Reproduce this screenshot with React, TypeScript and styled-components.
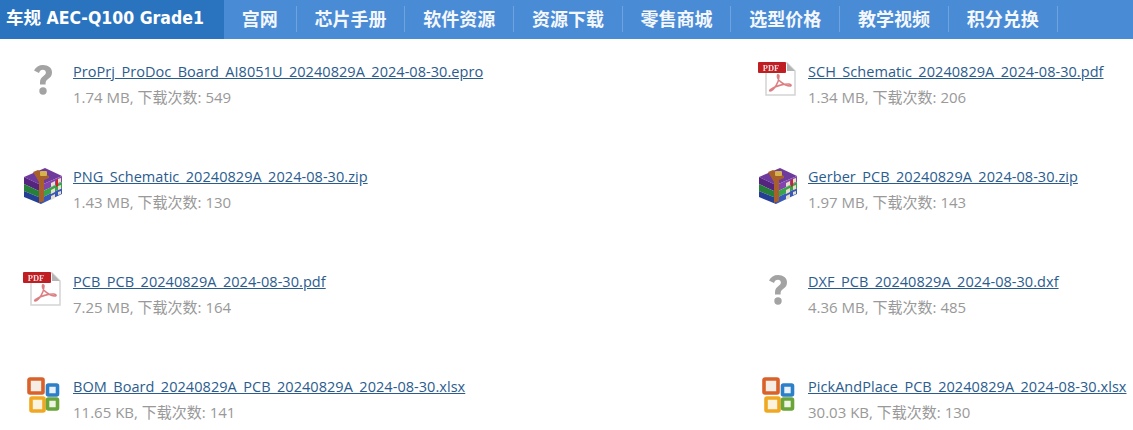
import React from "react";
import styled, { createGlobalStyle } from "styled-components";

const Global = createGlobalStyle`
  html, body { margin: 0; padding: 0; background: #fff; overflow: hidden; }
  body { font-family: "Open Sans", "Noto Sans CJK SC", sans-serif; }
`;
const Page = styled.div`width: 1133px; height: 430px; overflow: hidden;`;
const NavBar = styled.nav`
  display: flex; height: 39px; background: #4a8bd6; color: #fff;
`;
const Brand = styled.div`
  width: 224px; box-sizing: border-box; padding-left: 6px; background: #2a74bf;
  font: bold 17.5px/37px "DejaVu Sans Condensed", "Noto Sans CJK SC", sans-serif; white-space: nowrap;
`;
const NavList = styled.div`display: flex; align-items: center;`;
const NavItem = styled.a`
  box-sizing: border-box; height: 26px; padding: 0 17.85px; border-right: 1px solid #6fa3df;
  font: bold 18px/24px "Noto Sans CJK SC", sans-serif; color: #f4f8fd; white-space: nowrap;
  margin-top: -1px;
`;
const Grid = styled.div`
  display: grid; grid-template-columns: 735px 1fr; grid-auto-rows: 105px;
  padding: 16px 0 0 23px;
`;
const Row = styled.div`display: flex; gap: 10px; align-items: flex-start;`;
const IconBox = styled.div`
  width: 40px; height: 40px; flex: none; margin-top: 5px;
  svg { display: block; width: 40px; height: 40px; filter: blur(0.4px); }
`;
const Info = styled.div`display: flex; flex-direction: column; padding-top: 7px;`;
const FileLink = styled.a`
  font-size: 14.5px; line-height: 19px; letter-spacing: 0.05px; color: #2b5c8e; text-decoration: underline;
  white-space: nowrap;
`;
const Meta = styled.div`
  margin-top: 6px; font-size: 15px; line-height: 20px; color: #999; white-space: nowrap;
`;

const Question = () => (
  <svg viewBox="0 0 40 40">
    <path d="M11 10.500c1.700-3.500 5-5.500 9-5.500 5.200 0 9 2.900 9 7.400 0 3.200-1.700 5-3.900 6.600-1.900 1.400-2.500 2.300-2.500 4.300v1.200h-5.600v-1.900c0-3.200 1.100-4.700 3.200-6.300 1.600-1.200 2.700-2.100 2.700-3.700 0-1.700-1.200-2.800-3-2.800-2 0-3.100 1.100-3.900 3.200z" fill="#a3a3a3" />
    <circle cx="20" cy="31" r="3.700" fill="#a3a3a3" />
  </svg>
);
const Pdf = () => (
  <svg viewBox="0 0 40 40">
    <path d="M8 3h21l8 8v24H8z" fill="#fff" stroke="#d4d4d4" strokeWidth="1.500" />
    <path d="M29 3v8h8z" fill="#b5b5b5" />
    <rect x="0" y="2" width="28" height="11" rx="1" fill="#bf1e23" />
    <text x="13" y="10.500" textAnchor="middle" fontSize="8.500" fontWeight="bold" fontFamily="Liberation Serif, serif" fill="#f3d9d9">PDF</text>
    <path d="M12 31c4-1 9-8 9-15 0-1-1-2-1.500-.5-1 4 7 11 13 10.500 1.500-.5 0-2-2-2-5 0-13 2-17 5-2 1-2 2-1.500 2z" fill="none" stroke="#dc7f82" strokeWidth="1.600" />
  </svg>
);
const Rar = () => (
  <svg viewBox="0 0 40 40">
    <path d="M1 12 22 3l17 8-21 9z" fill="#6f3a9e" />
    <path d="M1 12l17 8v7L1 19z" fill="#55247f" />
    <path d="M18 20l21-9v6l-21 10z" fill="#8345ad" />
    <path d="M1 19l17 8v6L1 26z" fill="#27803a" />
    <path d="M18 27l21-10v6l-21 10z" fill="#37a34a" />
    <path d="M1 26l17 7v6L1 32z" fill="#243f93" />
    <path d="M18 33l21-10v6l-21 10z" fill="#3a58b8" />
    <path d="M28 18l4-2v4l-4 2zM28 25l4-2v4l-4 2zM28 31l4-2v4l-4 2z" fill="#e8dfc8" />
    <path d="M33 15l2-1v7l-2 1z" fill="#d42020" />
    <path d="M35 14l3-1v4l-3 1zM35 21l3-1v4l-3 1zM35 27l3-1v3l-3 1z" fill="#e8dfc8" />
    <path d="M10 7l5-2 11 6v2l-5 2v21l-5 2V17z" fill="#a8602a" />
    <rect x="17" y="6" width="7" height="5" rx="1" fill="#d6b24a" />
  </svg>
);
const Office = () => (
  <svg viewBox="0 0 40 40">
    <rect x="6" y="4" width="14" height="14" rx="1" fill="#f6eee6" stroke="#d9622b" strokeWidth="3.600" />
    <rect x="24.500" y="10" width="10" height="10" rx="1" fill="#e9f2fa" stroke="#2c7fc9" strokeWidth="3.600" />
    <rect x="8" y="23" width="13" height="13" rx="1" fill="#fbf3dd" stroke="#f0a823" strokeWidth="3.600" />
    <rect x="24.500" y="24" width="10" height="10" rx="1" fill="#eef5e4" stroke="#6aa53a" strokeWidth="3.600" />
  </svg>
);

const nav = ["宫网", "芯片手册", "软件资源", "资源下载", "零售商城", "选型价格", "教学视频", "积分兑换"];
const icons = { q: Question, pdf: Pdf, rar: Rar, xls: Office };
type Kind = keyof typeof icons;
const files: [Kind, string, string, number][] = [
  ["q", "ProPrj_ProDoc_Board_AI8051U_20240829A_2024-08-30.epro", "1.74 MB", 549],
  ["pdf", "SCH_Schematic_20240829A_2024-08-30.pdf", "1.34 MB", 206],
  ["rar", "PNG_Schematic_20240829A_2024-08-30.zip", "1.43 MB", 130],
  ["rar", "Gerber_PCB_20240829A_2024-08-30.zip", "1.97 MB", 143],
  ["pdf", "PCB_PCB_20240829A_2024-08-30.pdf", "7.25 MB", 164],
  ["q", "DXF_PCB_20240829A_2024-08-30.dxf", "4.36 MB", 485],
  ["xls", "BOM_Board_20240829A_PCB_20240829A_2024-08-30.xlsx", "11.65 KB", 141],
  ["xls", "PickAndPlace_PCB_20240829A_2024-08-30.xlsx", "30.03 KB", 130],
];

export default function App() {
  return (
    <Page>
      <Global />
      <NavBar>
        <Brand>车规 AEC-Q100 Grade1</Brand>
        <NavList>{nav.map((n) => <NavItem key={n}>{n}</NavItem>)}</NavList>
      </NavBar>
      <Grid>
        {files.map(([k, name, size, count]) => {
          const Icon = icons[k];
          return (
            <Row key={name}>
              <IconBox><Icon /></IconBox>
              <Info>
                <FileLink href="#">{name}</FileLink>
                <Meta>{size}, 下载次数: {count}</Meta>
              </Info>
            </Row>
          );
        })}
      </Grid>
    </Page>
  );
}
